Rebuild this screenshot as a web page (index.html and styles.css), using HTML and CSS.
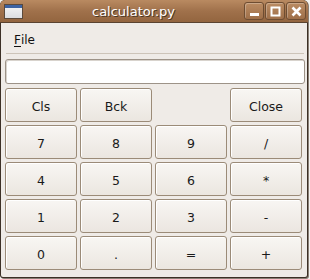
FILE: index.html
```html
<!DOCTYPE html>
<html lang="en">
<head>
    <meta charset="UTF-8">
    <title>calculator.py</title>
    <link rel="stylesheet" href="styles.css">
</head>
<body>
    <div class="window">
        <div class="titlebar">
            <div class="app-icon"><span></span></div>
            <div class="title">calculator.py</div>
            <div class="controls">
                <div class="ctrl">
                    <svg width="11" height="11" viewBox="0 0 11 11"><rect x="1" y="7" width="9" height="3" fill="#fff"/></svg>
                </div>
                <div class="ctrl">
                    <svg width="11" height="11" viewBox="0 0 11 11"><rect x="1.5" y="1.5" width="8" height="8" fill="none" stroke="#fff" stroke-width="2"/></svg>
                </div>
                <div class="ctrl">
                    <svg width="11" height="11" viewBox="0 0 11 11"><path d="M1.5 1.5 L9.5 9.5 M9.5 1.5 L1.5 9.5" stroke="#fff" stroke-width="2.6"/></svg>
                </div>
            </div>
        </div>

        <div class="client">
            <div class="menubar">
                <span class="menu-item"><u>F</u>ile</span>
            </div>
            <div class="separator"></div>

            <input class="display" type="text">

            <div class="keys">
                <button>Cls</button>
                <button>Bck</button>
                <span class="blank"></span>
                <button>Close</button>

                <button>7</button>
                <button>8</button>
                <button>9</button>
                <button>/</button>

                <button>4</button>
                <button>5</button>
                <button>6</button>
                <button>*</button>

                <button>1</button>
                <button>2</button>
                <button>3</button>
                <button>-</button>

                <button>0</button>
                <button>.</button>
                <button>=</button>
                <button>+</button>
            </div>
        </div>
    </div>
</body>
</html>
```

FILE: styles.css
```css
* {
    margin: 0;
    padding: 0;
    box-sizing: border-box;
    font-family: 'DejaVu Sans', 'Liberation Sans', sans-serif;
}

body {
    width: 310px;
    height: 279px;
    background: #f4f2ef;
    overflow: hidden;
}

.window {
    width: 308px;
    height: 278px;
    display: flex;
    flex-direction: column;
    border-radius: 5px 5px 3px 3px;
    overflow: hidden;
    background: #3c3026;
    padding: 0 1px 1px 1px;
    box-shadow: 1px 1px 0 #8a8076;
}

.titlebar {
    height: 23px;
    margin: 0 -1px;
    display: flex;
    align-items: center;
    padding: 0 2px 0 4px;
    background: linear-gradient(#b98a61, #a0714b 50%, #93653f);
    border-bottom: 1px solid #5a4330;
    border-radius: 5px 5px 0 0;
}

.app-icon {
    width: 19px;
    height: 15px;
    border: 1px solid #5b4a3c;
    background: linear-gradient(#f6f6f6, #dcdde0);
}

.app-icon span {
    display: block;
    height: 3px;
    background: #3d63a3;
}

.title {
    flex: 1;
    text-align: center;
    color: #fff;
    font-size: 13px;
    text-shadow: 1px 1px 0 #4a3625;
}

.controls {
    display: flex;
    gap: 1px;
}

.ctrl {
    width: 20px;
    height: 18px;
    display: flex;
    align-items: center;
    justify-content: center;
    border: 1px solid #6e4d32;
    border-radius: 3px;
    background: linear-gradient(#bb8c63, #9e6f49);
    box-shadow: inset 1px 1px 0 rgba(255, 255, 255, 0.25);
}

.client {
    flex: 1;
    background: #efebe7;
    border-radius: 0 0 2px 2px;
    padding: 0 3px 0 4px;
}

.menubar {
    height: 30px;
    display: flex;
    align-items: center;
    padding: 4px 0 0 9px;
}

.menu-item {
    font-size: 12px;
    color: #101010;
}

.menu-item u {
    text-decoration: none;
    border-bottom: 1px solid #101010;
    line-height: 11px;
    display: inline-block;
}

.separator {
    height: 1px;
    background: #cdc4b9;
    margin: 0 0 5px 1px;
}

.display {
    display: block;
    width: 300px;
    height: 25px;
    border: 1px solid #9d9388;
    border-radius: 3px;
    background: #fff;
    outline: none;
    box-shadow: inset 1px 1px 0 #d8d3cd;
}

.keys {
    display: grid;
    grid-template-columns: repeat(4, 72px);
    grid-auto-rows: 34px;
    gap: 3px;
    margin-top: 4px;
}

.keys button {
    border: 1px solid #9b8b78;
    border-radius: 3px;
    background: linear-gradient(#f8f6f3, #ebe6e0);
    box-shadow: inset 1px 1px 0 #fff;
    color: #1a1a1a;
    font-size: 12.5px;
    padding-top: 2px;
}
```
